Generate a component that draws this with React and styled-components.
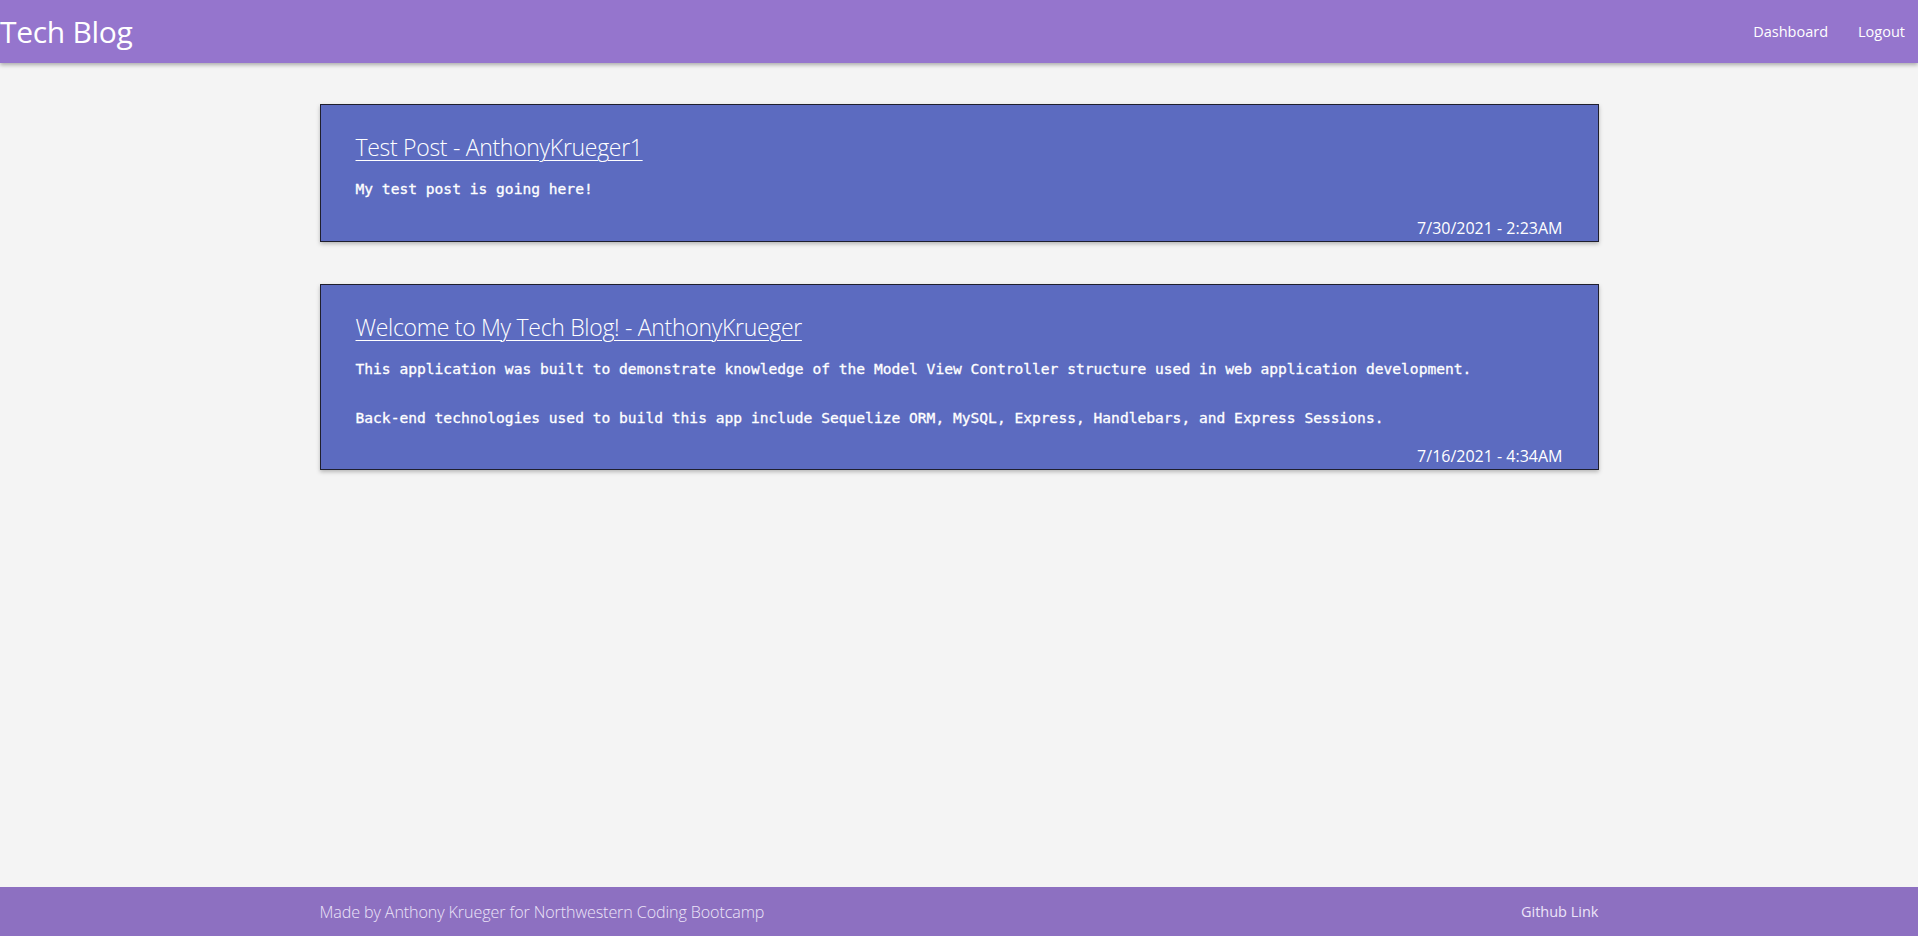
import styled, { createGlobalStyle } from "styled-components";

const GlobalStyle = createGlobalStyle`
  * {
    box-sizing: border-box;
  }

  body {
    margin: 0;
    background: #f4f4f4;
    font-family: "Open Sans", "Noto Sans", sans-serif;
  }
`;

const Page = styled.div`
  display: flex;
  flex-direction: column;
  min-height: 100vh;
`;

const Header = styled.header`
  display: flex;
  justify-content: space-between;
  align-items: center;
  height: 63px;
  padding-right: 13px;
  background: #9575cd;
  box-shadow: 0 2px 4px rgba(0, 0, 0, 0.3);
  position: relative;
  z-index: 1;
`;

const Brand = styled.h1`
  margin: 0;
  font-size: 30px;
  font-weight: 400;
  color: #fff;
  letter-spacing: -0.3px;
`;

const Nav = styled.nav`
  display: flex;
  gap: 30px;
`;

const NavLink = styled.a`
  color: #fff;
  font-size: 14.5px;
  text-decoration: none;
  cursor: pointer;
`;

const Main = styled.main`
  flex: 1;
  width: 1279px;
  margin: 0 auto;
  padding: 41px 0;
  display: flex;
  flex-direction: column;
  gap: 42px;
`;

const Card = styled.article`
  background: #5c6bc0;
  border: 1px solid #1f1f2e;
  box-shadow: 0 2px 4px rgba(0, 0, 0, 0.25);
  padding: 26px 35px 2px;
  color: #fff;
`;

const Title = styled.a`
  display: inline-block;
  font-size: 23px;
  font-weight: 300;
  line-height: 32px;
  color: #fff;
  text-decoration: underline;
  text-underline-offset: 4px;
  text-decoration-thickness: 1px;
  letter-spacing: -0.3px;
`;

const Body = styled.p`
  margin: 14px 0 0;
  font-family: "DejaVu Sans Mono", "Liberation Mono", monospace;
  font-size: 14.6px;
  font-weight: 400;
  line-height: 24.5px;
  white-space: pre-line;
  -webkit-text-stroke: 0.3px #fff;
`;

const Stamp = styled.div`
  margin-top: 15px;
  text-align: right;
  font-size: 16px;
  line-height: 22px;
`;

const Footer = styled.footer`
  height: 49px;
  background: #8d70c1;
`;

const FooterInner = styled.div`
  width: 1279px;
  height: 100%;
  margin: 0 auto;
  display: flex;
  justify-content: space-between;
  align-items: center;
  color: #ece4f8;
  font-size: 14.5px;
`;

const FooterText = styled.span`
  font-size: 16.1px;
  font-weight: 300;
  letter-spacing: -0.1px;
`;

const posts = [
  {
    id: 2,
    title: "Test Post - AnthonyKrueger1",
    body: "My test post is going here!",
    date: "7/30/2021 - 2:23AM",
  },
  {
    id: 1,
    title: "Welcome to My Tech Blog! - AnthonyKrueger",
    body:
      "This application was built to demonstrate knowledge of the Model View Controller structure used in web application development.\n\nBack-end technologies used to build this app include Sequelize ORM, MySQL, Express, Handlebars, and Express Sessions.",
    date: "7/16/2021 - 4:34AM",
  },
];

function PostCard({ post }) {
  return (
    <Card>
      <Title>{post.title}</Title>
      <Body>{post.body}</Body>
      <Stamp>{post.date}</Stamp>
    </Card>
  );
}

export default function App() {
  return (
    <Page>
      <GlobalStyle />
      <Header>
        <Brand>Tech Blog</Brand>
        <Nav>
          <NavLink>Dashboard</NavLink>
          <NavLink>Logout</NavLink>
        </Nav>
      </Header>
      <Main>
        {posts.map((post) => (
          <PostCard key={post.id} post={post} />
        ))}
      </Main>
      <Footer>
        <FooterInner>
          <FooterText>Made by Anthony Krueger for Northwestern Coding Bootcamp</FooterText>
          <span>Github Link</span>
        </FooterInner>
      </Footer>
    </Page>
  );
}
